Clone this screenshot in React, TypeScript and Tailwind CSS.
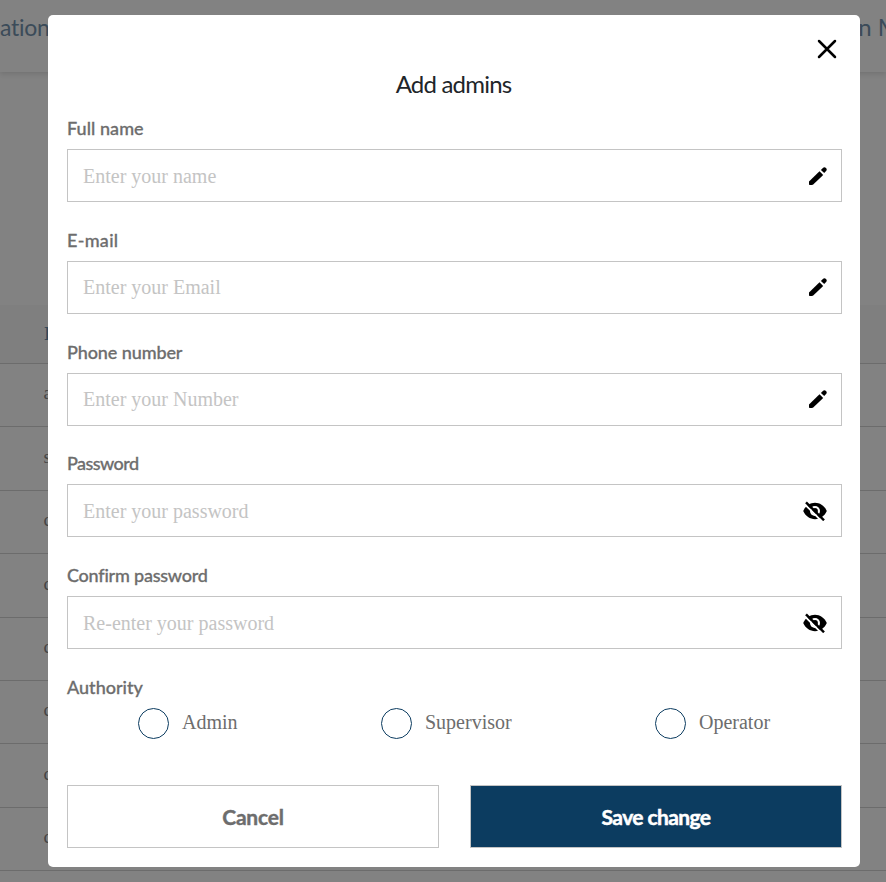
import React from "react";

const sans = "font-['Lato','Liberation_Sans',sans-serif]";
const serif = "font-['Liberation_Serif',serif]";

type FieldProps = { label: string; placeholder: string; secret?: boolean; spacing: string };

const fields: FieldProps[] = [
  { label: "Full name", placeholder: "Enter your name", spacing: "tracking-[0.05px]" },
  { label: "E-mail", placeholder: "Enter your Email", spacing: "tracking-[0.3px]" },
  { label: "Phone number", placeholder: "Enter your Number", spacing: "tracking-[-0.1px]" },
  { label: "Password", placeholder: "Enter your password", secret: true, spacing: "tracking-[-0.55px]" },
  { label: "Confirm password", placeholder: "Re-enter your password", secret: true, spacing: "tracking-[-0.22px]" },
];

const rowInitials = ["a", "s", "c", "c", "c", "c", "c", "c"];

function PencilIcon() {
  return (
    <svg viewBox="0 0 18 18" className="size-[18px] shrink-0">
      <path d="M0 14.4 10.5 4.2 14.2 7.9 4.2 17.4 3 18H0.6L0 17.4Z" fill="black" />
      <path d="M11.9 2.9 13.9 0.9Q15.4-.5 17 .9 18.4 2.5 17.1 4.1L15.2 6Z" fill="black" />
    </svg>
  );
}

function HiddenEyeIcon() {
  return (
    <svg viewBox="0 0 24 20" className="h-[20px] w-[24px] shrink-0" fill="none">
      <path d="M.2 10C2.4 5 7 1.8 12 1.8S21.6 5 23.8 10C21.6 15 17 18.2 12 18.2S2.4 15 .2 10Z" fill="black" />
      <circle cx="12" cy="10" r="5" fill="white" />
      <circle cx="12" cy="10" r="2.9" fill="black" />
      <path d="M1.3 2.7 18.3 19.7" stroke="white" strokeWidth="2" />
      <path d="M3 1.3 21 19.3" stroke="black" strokeWidth="2.4" />
    </svg>
  );
}

function Field({ label, placeholder, secret, spacing }: FieldProps) {
  return (
    <label className="flex h-[111.75px] shrink-0 flex-col">
      <span className={`${sans} ${spacing} h-[33.2px] shrink-0 text-[18px] leading-[24px] font-medium text-[#6d6d6d] [-webkit-text-stroke:0.3px_#6d6d6d]`}>{label}</span>
      <span className="flex h-[53px] shrink-0 items-center border border-[#c4c4c4] pr-[14px] pl-[15px]">
        <input
          className={`${serif} min-w-0 flex-1 bg-transparent text-[20px] text-[#6d6d6d] outline-none placeholder:text-[#c4c4c4]`}
          placeholder={placeholder}
          type={secret ? "password" : "text"}
        />
        {secret ? <HiddenEyeIcon /> : <PencilIcon />}
      </span>
    </label>
  );
}

function Choice({ label, className }: { label: string; className: string }) {
  return (
    <label className={`flex items-center ${className}`}>
      <span className="size-[31px] rounded-full border border-[#0c3c60]" />
      <span className={`${serif} -mt-[3px] ml-[13px] text-[20px] leading-6 text-[#6d6d6d]`}>{label}</span>
    </label>
  );
}

export default function App() {
  return (
    <div className="relative h-[882px] w-[886px] overflow-hidden bg-[#828282]">
      <header className={`${sans} flex h-[72px] justify-between pt-[11px] text-[24px] leading-[32px] text-[#3b4b59] shadow-[0_2px_5px_rgba(0,0,0,0.12)]`}>
        <span className="text-[23px] tracking-[-0.3px]">ation</span>
        <span className="-mr-[14px]">n M</span>
      </header>
      <div className={`${serif} pt-[233px] text-[19px] text-[#454545]`}>
        <div className="flex h-[59px] items-center border-b border-[#6c6c6c] bg-[#7f7f7f] pl-[44px] font-bold text-[#34495a]">I</div>
        {rowInitials.map((letter, i) => (
          <div key={i} className="flex h-[63.4px] items-center border-b border-[#6c6c6c] pb-[3px] pl-[43.5px]">{letter}</div>
        ))}
      </div>

      <section className="absolute top-[15px] left-[48px] flex h-[852px] w-[812px] flex-col rounded-[5px] bg-white pr-[18px] pl-[19px]">
        <button className="mt-[24px] mr-[5px] flex size-[20px] items-center justify-center self-end" aria-label="Close">
          <svg viewBox="0 0 20 20" className="size-[20px]" stroke="black" strokeWidth="2.5" strokeLinecap="round">
            <path d="M2 2 18 18M18 2 2 18" />
          </svg>
        </button>
        <h1 className={`${sans} mt-[9px] h-[33px] shrink-0 pr-[2px] text-center text-[24px] leading-[32px] tracking-[-0.8px] text-[#212529]`}>Add admins</h1>
        <div className="mt-[15px] flex shrink-0 flex-col">
          {fields.map((field) => <Field key={field.label} {...field} />)}
        </div>
        <div className={`${sans} h-[33px] shrink-0 text-[18px] leading-[24px] font-medium text-[#6d6d6d] [-webkit-text-stroke:0.3px_#6d6d6d]`}>Authority</div>
        <div className="flex h-[31px] shrink-0 items-center pl-[71px]">
          <Choice label="Admin" className="w-[243px]" />
          <Choice label="Supervisor" className="w-[274px]" />
          <Choice label="Operator" className="" />
        </div>
        <div className={`${sans} mt-[46px] grid h-[63px] shrink-0 grid-cols-[372px_372px] gap-[31px] text-[21px] font-bold`}>
          <button className="border border-[#c4c4c4] tracking-[-0.2px] text-[#6d6d6d] [-webkit-text-stroke:0.4px_#6d6d6d]">Cancel</button>
          <button className="border border-[#c4c4c4] bg-[#0c3c60] tracking-[-0.6px] text-white [-webkit-text-stroke:0.5px_white]">Save change</button>
        </div>
      </section>
    </div>
  );
}
